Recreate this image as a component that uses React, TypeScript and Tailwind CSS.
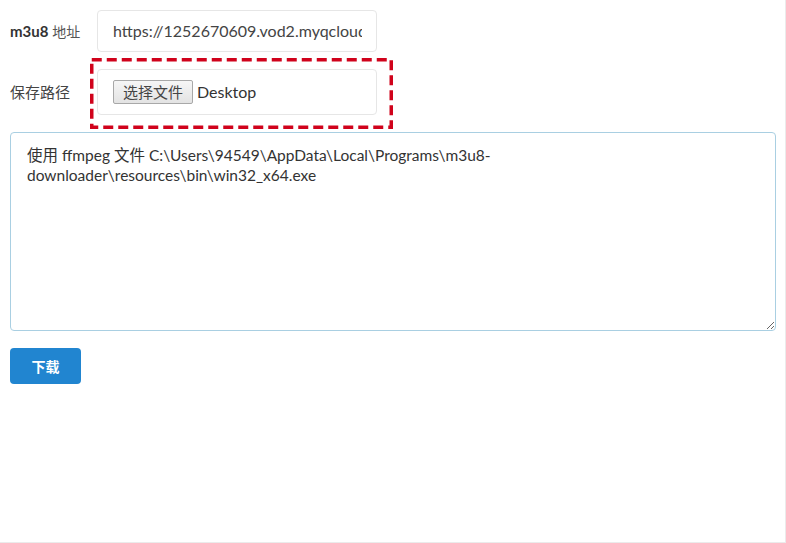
import React from "react";

const latin = "font-['Lato','Noto_Sans_CJK_SC',sans-serif]";

export default function App() {
  const ffmpegInfo =
    "使用 ffmpeg 文件 C:\\Users\\94549\\AppData\\Local\\Programs\\m3u8-\ndownloader\\resources\\bin\\win32_x64.exe";

  return (
    <div
      className={`relative h-[543px] w-[786px] border-r border-b border-[#ebebeb] bg-white text-[#333] ${latin}`}
    >
      <div className="px-[10px] pt-[10px]">
        {/* URL row */}
        <div className="flex items-center">
          <label className="w-[87px] text-[15px] text-[#333]">
            <span className="font-bold">m3u8</span>{" "}
            <span className="text-[14px] text-[#555]">地址</span>
          </label>
          <div className="flex h-[42px] w-[280px] items-center rounded-[4px] border border-[#e6e6e6] pl-[15px] pr-[14px] text-[16px] text-[#444]">
            <span className="block min-w-0 flex-1 overflow-hidden whitespace-nowrap">
              https://1252670609.vod2.myqcloud.com/index.m3u8
            </span>
          </div>
        </div>

        {/* Save path row */}
        <div className="mt-[17px] flex items-center">
          <label className="w-[87px] text-[15px] text-[#444]">保存路径</label>
          <div className="flex h-[46px] w-[280px] items-center rounded-[4px] border border-[#e6e6e6] pl-[15px] text-[16px]">
            <button className="flex h-[24px] w-[80px] items-center justify-center rounded-[2px] border border-[#a8a8a8] bg-gradient-to-b from-[#f6f6f6] to-[#e3e3e3] text-[15px] text-[#444]">
              选择文件
            </button>
            <span className="ml-[4px] text-[#333]">Desktop</span>
          </div>
        </div>

        {/* ffmpeg info */}
        <textarea
          readOnly
          value={ffmpegInfo}
          className={`mt-[17px] block h-[199px] w-[766px] resize-y rounded-[4px] border border-[#a9cfe2] px-[16px] py-[12px] text-[15.5px] leading-[20px] text-[#333] outline-none ${latin}`}
        />

        <button className="mt-[17px] flex h-[36px] w-[71px] items-center justify-center rounded-[4px] bg-[#2185d0] text-[14px] font-bold text-white">
          下载
        </button>
      </div>

      {/* dashed highlight around the save path field */}
      <svg
        className="pointer-events-none absolute left-[90px] top-[58px]"
        width="303"
        height="71"
        viewBox="0 0 303 71"
      >
        <rect
          x="1.75"
          y="1.75"
          width="299.5"
          height="67.5"
          fill="none"
          stroke="#d0021b"
          strokeWidth="3.5"
          strokeDasharray="10 5"
        />
      </svg>
    </div>
  );
}
